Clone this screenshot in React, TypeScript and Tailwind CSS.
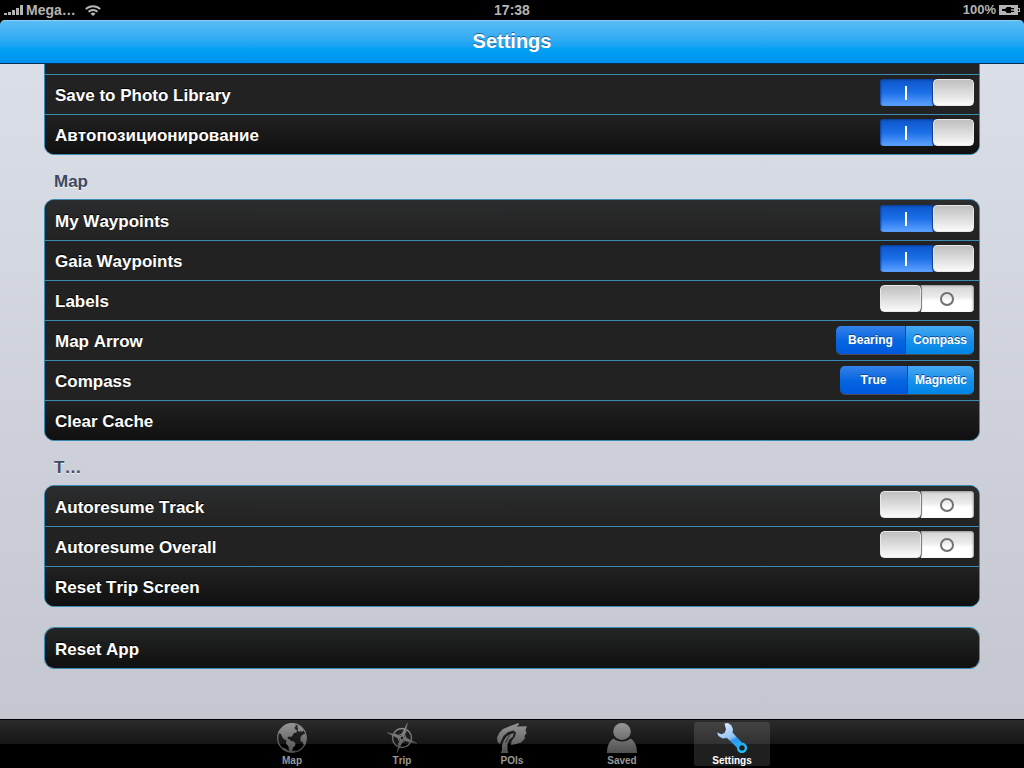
import { useState } from 'react'
import type { ReactNode } from 'react'
import clsx from 'clsx'

interface RowProps {
  label: string
  htmlFor?: string
  children?: ReactNode
}

function Group({ children, clipped }: { children: ReactNode; clipped?: boolean }) {
  return (
    <div
      className={clsx(
        'mx-11 overflow-hidden border-x border-b border-[#3a8ab4] bg-[#222222]',
        clipped ? 'rounded-b-[10px]' : 'rounded-[10px] border-t',
      )}
    >
      {children}
    </div>
  )
}

const rowClass =
  'flex h-10 items-start justify-between border-t border-[#3a8ab4] bg-linear-to-b from-[#222222] to-[#222222] pr-[5px] pl-2.5 first:border-t-0 first:from-[#2b2c2d] first:pt-px last:to-[#101010] only:from-[#242525]'

const rowTextClass = 'pt-[11px] text-[17px] leading-5 font-bold text-white [text-shadow:0_-1px_0_#000]'

function Row({ label, htmlFor, children }: RowProps) {
  return (
    <div className={rowClass}>
      {htmlFor ? (
        <label htmlFor={htmlFor} className={rowTextClass}>{label}</label>
      ) : (
        <span className={rowTextClass}>{label}</span>
      )}
      {children}
    </div>
  )
}

function ActionRow({ label }: { label: string }) {
  return (
    <button type="button" className={clsx(rowClass, 'w-full text-left')}>
      <span className={rowTextClass}>{label}</span>
    </button>
  )
}

function SwitchRow({ id, label, initial }: { id: string; label: string; initial: boolean }) {
  const [on, setOn] = useState(initial)

  return (
    <Row label={label} htmlFor={id}>
      <span className="relative mt-1 flex h-[27px] w-[94px] shrink-0 overflow-hidden rounded-[4px]">
        <input
          id={id}
          type="checkbox"
          role="switch"
          checked={on}
          onChange={() => setOn(!on)}
          className="absolute inset-0 z-10 m-0 h-full w-full cursor-pointer opacity-0"
        />
        {on && (
          <span className="flex flex-1 items-center justify-center bg-linear-to-b from-[#0c55c8] via-[#1b6fe8] to-[#5ca2ff] pr-0.5 shadow-[inset_1px_1px_2px_#0a3c96]">
            <span className="h-3.5 w-0.5 bg-white" />
          </span>
        )}
        <span
          className={clsx(
            'w-[41px] rounded-[4px] border border-[#e8e8e8] bg-linear-to-b from-[#bfbfbf] to-[#fafafa]',
            on ? 'shadow-[-1px_0_1px_#123e85]' : 'z-1 shadow-[1px_0_1px_#777777]',
          )}
        />
        {!on && (
          <span className="flex flex-1 items-center justify-center bg-linear-to-b from-[#d4d4d4] from-0% via-[#ececec] via-45% to-white to-60% pr-0.5 shadow-[inset_-1px_1px_2px_#999999]">
            <span className="h-3.5 w-3.5 rounded-full border-2 border-[#707070]" />
          </span>
        )}
      </span>
    </Row>
  )
}

function SegmentRow({ label, options }: { label: string; options: string[] }) {
  const [selected, setSelected] = useState(options[0])

  return (
    <Row label={label}>
      <div
        role="group"
        aria-label={label}
        className="mt-[5px] grid h-7 grid-cols-2 overflow-hidden rounded-[5px] shadow-[0_1px_0_#4a4f55]"
      >
        {options.map((option) => (
          <button
            key={option}
            type="button"
            aria-pressed={option === selected}
            onClick={() => setSelected(option)}
            className={clsx(
              'border-l border-[#0a4a9c] px-[7px] text-xs leading-7 font-bold text-white [text-shadow:0_-1px_0_#0a4a90] first:border-l-0',
              option === selected
                ? 'bg-linear-to-b from-[#3282ea] via-[#0667e0] to-[#0058dc]'
                : 'bg-linear-to-b from-[#45a9f2] via-[#1791ea] to-[#0084e6]',
            )}
          >
            {option}
          </button>
        ))}
      </div>
    </Row>
  )
}

function SectionTitle({ children }: { children: ReactNode }) {
  return (
    <h2 className="mx-11 h-11 pt-[17px] pl-2.5 text-[17px] leading-5 font-bold text-[#3e4962] [text-shadow:0_1px_0_#f4f5f8]">
      {children}
    </h2>
  )
}

function StatusBar() {
  return (
    <div className="grid h-5 grid-cols-3 items-center bg-black px-1 text-sm leading-5 font-bold text-[#b4b4b4]">
      <div className="flex items-center">
        <svg width="19" height="10" viewBox="0 0 19 10" fill="currentColor" aria-hidden="true">
          <rect x="0" y="8" width="3" height="2" />
          <rect x="4" y="7" width="3" height="3" />
          <rect x="8" y="5" width="3" height="5" />
          <rect x="12" y="3" width="3" height="7" />
          <rect x="16" y="0" width="3" height="10" />
        </svg>
        <span className="ml-[3px]">Mega…</span>
        <svg className="ml-[9px]" width="16" height="11" viewBox="0 0 16 11" fill="none" stroke="currentColor" strokeWidth="1.9" aria-hidden="true">
          <path d="M.8 4.1A10.4 10.4 0 0 1 15.2 4.1" />
          <path d="M3.5 6.7a6.6 6.6 0 0 1 9 0" />
          <path d="M8 11 5.5 8.7a3.8 3.8 0 0 1 5 0z" fill="currentColor" stroke="none" />
        </svg>
      </div>
      <div className="text-center">17:38</div>
      <div className="flex items-center justify-end">
        <span className="text-[13px]">100%</span>
        <svg className="ml-[3px]" width="21" height="10" viewBox="0 0 21 10" aria-hidden="true">
          <path d="M0 0h19v3h2v4h-2v3H0z" fill="currentColor" />
          <path d="M3 4h3l2-2h4v1h3v1.3h-3v1.400h3V7h-3v1H8L6 6H3z" fill="#000" />
          <path d="M19.5 4v2" stroke="#000" />
        </svg>
      </div>
    </div>
  )
}

function IconFill() {
  return (
    <defs>
      <linearGradient id="tab-grey" x1="0" y1="0" x2="0" y2="30" gradientUnits="userSpaceOnUse">
        <stop offset="0" stopColor="#969696" />
        <stop offset="1" stopColor="#505050" />
      </linearGradient>
      <linearGradient id="tab-blue" x1="8" y1="2" x2="22" y2="30" gradientUnits="userSpaceOnUse">
        <stop offset="0" stopColor="#d4e6fb" />
        <stop offset="0.45" stopColor="#8ec1f5" />
        <stop offset="0.55" stopColor="#2f96ee" />
        <stop offset="1" stopColor="#19c6ff" />
      </linearGradient>
    </defs>
  )
}

const iconClass = 'h-[30px] w-[30px] shrink-0'

function GlobeIcon() {
  return (
    <svg className={iconClass} viewBox="0 0 30 30" fill="url(#tab-grey)" aria-hidden="true">
      <IconFill />
      <circle cx="15" cy="15" r="14.3" fill="none" stroke="url(#tab-grey)" strokeWidth="1.2" />
      <path d="M3.5 6 8 2l5-1.5 5 .5 1 2-1.500 1.500.5 1.500 2 1.500-.5 2-2.500.5-1.500 2.500-1.500 1.500-2-.5-1.500 1 .5 1.500 2 .5 1 1.500 3 .5 1.500 2-.5 2.500-2 1.500-.5 3-2 1-1.500-1-.5-4-2.500-3 .5-3L6.500 16 5 13.500 4 11 1 10z" />
      <path d="M20 3 24 3.500l2.500 3-1 2.500-2-1-1.500 1-1.500-2 .5-1.500z" />
      <path d="M25 12 28.500 10.500l1 4.500-1 6-2 .5-1-2.500-2-1v-3.500z" />
      <path d="M4.500 24l4 1.500 2.500 2 4 .5 4-.5-2 1.700-5-.2-4-2z" />
    </svg>
  )
}

function CompassIcon() {
  return (
    <svg className={iconClass} viewBox="0 0 30 30" fill="none" stroke="url(#tab-grey)" aria-hidden="true">
      <circle cx="15" cy="15" r="9.5" strokeWidth="1.4" />
      <circle cx="15" cy="15" r="4" />
      <path d="M8 11 22 19M19 8 11 22" strokeWidth="1.3" />
      <path
        d="M20.5 0 17 13.500 30 20.500 16.500 17 9.800 30 13 16.500 0 9.500 13.500 13z"
        fill="url(#tab-grey)"
        strokeWidth=".3"
      />
      <circle cx="15" cy="15" r="1.2" fill="#161616" stroke="none" />
    </svg>
  )
}

function TreeIcon() {
  return (
    <svg className={iconClass} viewBox="0 0 30 30" fill="url(#tab-grey)" aria-hidden="true">
      <path d="M21.5 0 22 1.500 19.500 3.500 30 3.200 28.500 7 29.500 10 27.500 13 28 15.500 24 19.500 19 21 14 22 14.500 18 18 13.500 19 9.500 16.500 7.500 11 9 6.500 13 4 18.500 3 21 .5 19 0 14.500 2.500 9.500 6 6l6-2.500z" />
      <path d="M3.500 30 5 27.500V22L7 17l3-4 5.500-2.500 1.200-.5-.7 3.500-3.500 3-2 4v7l1 2.500z" />
      <path d="M8.500 19.500 12.500 12.500" stroke="#111" strokeWidth=".8" />
    </svg>
  )
}

function PersonIcon() {
  return (
    <svg className={iconClass} viewBox="0 0 30 30" fill="url(#tab-grey)" aria-hidden="true">
      <ellipse cx="15" cy="8.5" rx="8.8" ry="8.5" />
      <path d="M0 30c0-7.500 2.500-12 6.500-14.500C8.500 17.500 11.500 18.500 15 18.500s6.500-1 8.500-3C27.500 18 30 22.500 30 30z" />
    </svg>
  )
}

function WrenchIcon() {
  return (
    <svg className={iconClass} viewBox="0 0 30 30" fill="url(#tab-blue)" fillRule="evenodd" aria-hidden="true">
      <path d="M7.500.5 11 0l3.500 2.500 1.500 4-.5 3L25 19.800c3-.2 5 2.200 5 5a5 5 0 0 1-5 5.200c-3 0-5.200-2.200-5-5.200L10 15l-4.500.5L1.500 13 0 9.500l4.500 1.700 3-1.200 1.500-3.500zM25 22.200a2.700 2.700 0 1 0 0 5.400 2.700 2.700 0 0 0 0-5.400z" />
    </svg>
  )
}

const tabs = [
  { label: 'Map', Icon: GlobeIcon },
  { label: 'Trip', Icon: CompassIcon },
  { label: 'POIs', Icon: TreeIcon },
  { label: 'Saved', Icon: PersonIcon },
  { label: 'Settings', Icon: WrenchIcon },
]

function TabBar() {
  const [active, setActive] = useState('Settings')

  return (
    <nav className="flex h-[49px] items-start justify-center gap-[34px] border-t border-black bg-black bg-linear-to-b from-[#2b2b2b] from-0% via-[#161616] via-50% to-black to-50% pt-0.5">
      {tabs.map(({ label, Icon }) => (
        <button
          key={label}
          type="button"
          onClick={() => setActive(label)}
          aria-current={label === active ? 'page' : undefined}
          className={clsx(
            'flex h-11 w-[76px] flex-col items-center rounded-[3px] pt-px text-[10px] leading-[15px] font-bold',
            label === active ? 'bg-white/12 text-white' : 'text-[#999999]',
          )}
        >
          <Icon />
          <span>{label}</span>
        </button>
      ))}
    </nav>
  )
}

export default function App() {
  return (
    <div className="flex min-h-screen flex-col bg-black font-['Liberation_Sans',Arial,sans-serif] [font-kerning:none]">
      <StatusBar />
      <header className="flex h-11 items-center justify-center rounded-t-[5px] border-t border-b border-t-[#8bd0f9] border-b-[#0a2f52] bg-linear-to-b from-[#59bdf5] from-0% via-[#00a0f2] via-67% to-[#0092ee] pb-0.5">
        <h1 className="text-xl font-bold text-white [text-shadow:0_-1px_0_#1d6591]">Settings</h1>
      </header>

      <main className="flex-1 bg-linear-to-b from-[#dadfe7] via-[#cfd2db] to-[#c4c7d0] pb-5">
        <Group clipped>
          <div className="h-2.5" />
          <SwitchRow id="photo-library" label="Save to Photo Library" initial />
          <SwitchRow id="auto-position" label="Автопозиционирование" initial />
        </Group>

        <SectionTitle>Map</SectionTitle>
        <Group>
          <SwitchRow id="my-waypoints" label="My Waypoints" initial />
          <SwitchRow id="gaia-waypoints" label="Gaia Waypoints" initial />
          <SwitchRow id="labels" label="Labels" initial={false} />
          <SegmentRow label="Map Arrow" options={['Bearing', 'Compass']} />
          <SegmentRow label="Compass" options={['True', 'Magnetic']} />
          <ActionRow label="Clear Cache" />
        </Group>

        <SectionTitle>T…</SectionTitle>
        <Group>
          <SwitchRow id="autoresume-track" label="Autoresume Track" initial={false} />
          <SwitchRow id="autoresume-overall" label="Autoresume Overall" initial={false} />
          <ActionRow label="Reset Trip Screen" />
        </Group>

        <div className="mt-5">
          <Group>
            <ActionRow label="Reset App" />
          </Group>
        </div>
      </main>

      <TabBar />
    </div>
  )
}
